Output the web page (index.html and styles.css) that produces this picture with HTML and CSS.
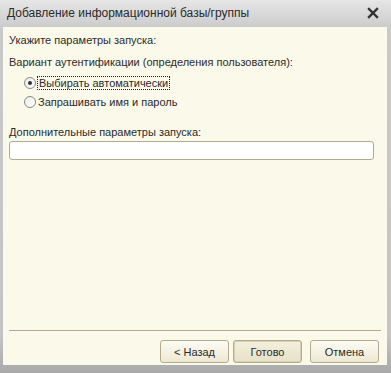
FILE: index.html
```html
<!DOCTYPE html>
<html lang="ru">
<head>
  <meta charset="UTF-8">
  <title>Добавление информационной базы/группы</title>
  <link rel="stylesheet" href="styles.css">
</head>
<body>
  <div class="window">
    <div class="titlebar">
      <span class="title">Добавление информационной базы/группы</span>
      <svg class="close" width="12" height="12" viewBox="0 0 12 12">
        <path d="M2 2 L10 10 M10 2 L2 10" stroke="#333" stroke-width="2.4" stroke-linecap="square"/>
      </svg>
    </div>

    <div class="content">
      <p class="label">Укажите параметры запуска:</p>
      <p class="label">Вариант аутентификации (определения пользователя):</p>

      <div class="radios">
        <label class="radio">
          <span class="dot checked"></span>
          <span class="focus">Выбирать автоматически</span>
        </label>
        <label class="radio">
          <span class="dot"></span>
          <span>Запрашивать имя и пароль</span>
        </label>
      </div>

      <p class="label extra">Дополнительные параметры запуска:</p>
      <div class="input"></div>

      <div class="spacer"></div>
      <hr class="sep">

      <div class="buttons">
        <button class="btn">&lt; Назад</button>
        <button class="btn default">Готово</button>
        <button class="btn cancel">Отмена</button>
      </div>
    </div>
  </div>
</body>
</html>
```

FILE: styles.css
```css
:root {
  --cream: #fbf9ea;
  --text: #2b2b2b;
  --line: #b3ac8c;
}

body {
  margin: 0;
  padding: 0;
  font-family: 'Liberation Sans', Arial, sans-serif;
  background: #9a9a9a;
}

.window {
  width: 391px;
  height: 373px;
  box-sizing: border-box;
  display: flex;
  flex-direction: column;
  padding: 0 4px 8px 3px;
  background: linear-gradient(to bottom, #e6e6e6 0%, #c9c9c9 8%, #c4c4c4 90%, #a9a9a9 100%);
}

.titlebar {
  height: 27px;
  display: flex;
  align-items: center;
  justify-content: space-between;
  padding: 0 8px 0 4px;
  flex-shrink: 0;
}

.title {
  font-size: 12px;
  color: #2a2a2a;
  margin-top: -2px;
}

.close {
  margin-top: -2px;
}

.content {
  flex: 1;
  background: var(--cream);
  display: flex;
  flex-direction: column;
  padding: 6px 8px 0 6px;
  color: var(--text);
  font-size: 11px;
}

.label {
  margin: 0;
  line-height: 14px;
  height: 22px;
}

.radios {
  display: flex;
  flex-direction: column;
  gap: 6px;
  padding-left: 15px;
  margin-top: -1px;
}

.radio {
  display: flex;
  align-items: center;
  height: 13px;
}

.dot {
  width: 12px;
  height: 12px;
  border: 1px solid #8a8a80;
  border-radius: 50%;
  background: linear-gradient(135deg, #ecece8, #ffffff);
  box-sizing: border-box;
  margin-right: 2px;
  position: relative;
  flex-shrink: 0;
}

.dot.checked::after {
  content: "";
  position: absolute;
  left: 3px;
  top: 3px;
  width: 4px;
  height: 4px;
  border-radius: 50%;
  background: #333;
}

.focus {
  outline: 1px dotted #222;
  outline-offset: 0;
  padding: 0 1px;
}

.extra {
  margin-top: 17px;
  height: 16px;
}

.input {
  height: 17px;
  margin-right: 5px;
  background: #fff;
  border: 1px solid var(--line);
  border-radius: 3px;
}

.spacer {
  flex: 1;
}

.sep {
  margin: 0 -2px 0 0;
  border: none;
  border-top: 1px solid var(--line);
}

.buttons {
  display: flex;
  justify-content: flex-end;
  gap: 4px;
  padding: 9px 0 0 0;
  height: 34px;
  box-sizing: border-box;
}

.btn {
  width: 69px;
  height: 23px;
  font-family: 'Liberation Sans', Arial, sans-serif;
  font-size: 11px;
  color: var(--text);
  border: 1px solid var(--line);
  border-radius: 3px;
  background: linear-gradient(to bottom, #fdfcf4, #ece8d2);
  padding: 0;
}

.btn.default {
  background: linear-gradient(to bottom, #f3f0de, #e6e1c6);
  box-shadow: inset 0 0 0 1px #d7d1b3;
}

.btn.cancel {
  margin-left: 4px;
}
```
